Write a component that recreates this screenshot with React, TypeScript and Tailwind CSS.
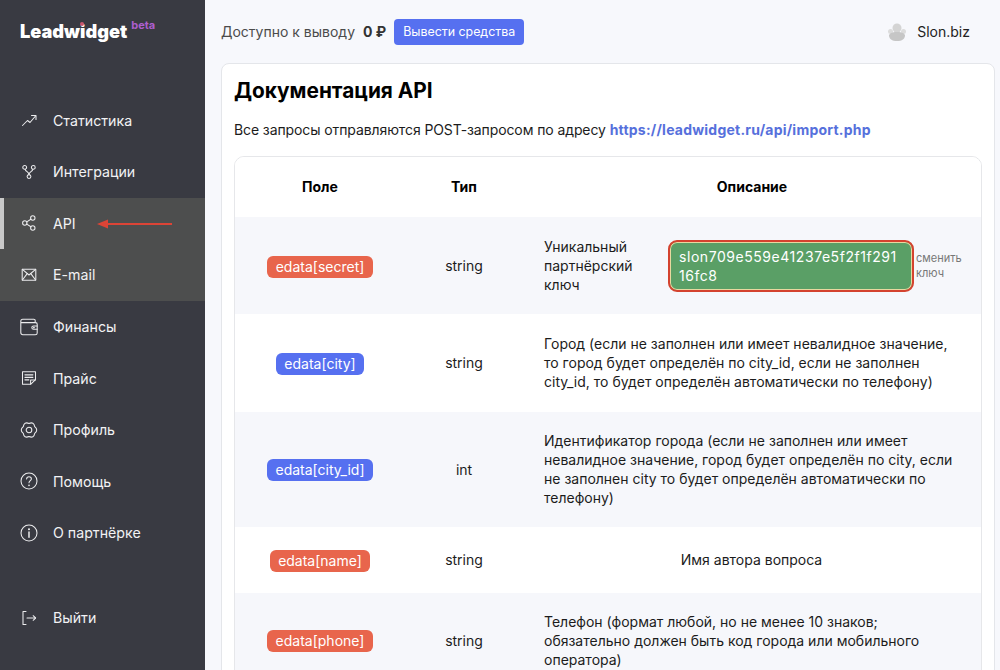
import React from "react";

const F = { fontFamily: '"Inter", "Noto Sans", sans-serif' };

const Ic = ({ children }: { children: React.ReactNode }) => (
  <svg width="18" height="18" viewBox="0 0 18 18" fill="none" stroke="#ececee" strokeWidth="1.05" strokeLinecap="round" strokeLinejoin="round">
    {children}
  </svg>
);

const icons: Record<string, React.ReactNode> = {
  stats: <Ic><path d="M2.5 14.5 L7.5 9.5 L10 11.5 L15.5 5" /><path d="M11.5 4.5 H16 V8.5" /></Ic>,
  integ: <Ic><circle cx="4.7" cy="4.4" r="1.9" /><circle cx="13.3" cy="4.4" r="1.9" /><circle cx="9" cy="13.6" r="1.9" /><path d="M5.2 6.3 C5.7 9 8.8 8.5 9 11.7" /><path d="M12.8 6.3 C12.3 9 9.2 8.5 9 11.7" /></Ic>,
  api: <Ic><circle cx="12.8" cy="4" r="2.2" /><circle cx="4.8" cy="9" r="2.2" /><circle cx="12.8" cy="14" r="2.2" /><path d="M6.7 7.9 L10.9 5.2" /><path d="M6.7 10.1 L10.9 12.8" /></Ic>,
  mail: <Ic><rect x="2.2" y="3.2" width="13.6" height="11" rx="0.4" /><path d="M2.4 3.4 L9 9 L15.6 3.4" /><path d="M2.4 14 L7.2 7.6" /><path d="M15.6 14 L10.8 7.6" /></Ic>,
  wallet: <Ic><path d="M15.2 4.6 V2.6 C15.2 1.6 14.6 1.2 13.8 1.2 H2.8 C1.5 1.2 0.8 2 0.8 3.2 V14.6 C0.8 15.9 1.6 16.7 2.9 16.7 H15.2 C16.4 16.7 17.2 16 17.2 15 V6.2 C17.2 5.2 16.5 4.6 15.6 4.6 H1.1" /><path d="M17.2 8 H13.6 C12.4 8 11.8 8.8 11.8 9.6 C11.8 10.5 12.4 11.3 13.6 11.3 H17.2" /><circle cx="13.9" cy="9.6" r="0.4" /></Ic>,
  price: <Ic><path d="M2.5 2.7 H15.5 V10.6 L10.6 15.3 H2.5 Z" /><path d="M5 5.8 H12.8" strokeWidth="1.3" /><path d="M5 8.3 H12.8" strokeWidth="1.3" /><path d="M5 10.8 H8.8" strokeWidth="1.3" /><path d="M10.6 15 V11 H15.3" /></Ic>,
  gear: <Ic><path d="M14.7 5.7 Q18.8 9 14.7 12.3 Q13.9 17.5 9 15.6 Q4.1 17.5 3.3 12.3 Q-0.8 9 3.3 5.7 Q4.1 0.5 9 2.4 Q13.9 0.5 14.7 5.7 Z" /><circle cx="9" cy="9" r="2.8" /></Ic>,
  help: <Ic><circle cx="9" cy="9" r="8" /><path d="M6.6 7 C6.7 5.5 7.8 4.7 9 4.7 C10.4 4.7 11.4 5.7 11.4 6.9 C11.4 8.6 9 8.7 9 10.8" /><circle cx="9" cy="13.3" r="0.35" /></Ic>,
  info: <Ic><circle cx="9" cy="9" r="8" /><path d="M9 8 V13.3" strokeWidth="1.5" /><circle cx="9" cy="5.2" r="0.5" /></Ic>,
  exit: <Ic><path d="M6 2.5 H3 V15.5 H6" /><path d="M7 9 H15.5" /><path d="M13.2 6.7 L15.6 9 L13.2 11.3" /></Ic>,
};

const NavItem = ({ icon, label, active, hl }: { icon: string; label: string; active?: boolean; hl?: boolean }) => (
  <div className={`relative flex h-[51.6px] items-center pl-[20px] ${hl ? "bg-[#4d4e4e]" : ""}`}>
    {active && <div className="absolute left-0 top-0 h-full w-[4px] bg-[#c9c9c9]" />}
    <div className="flex w-[33px] items-center"><span className="flex w-[18px] items-center justify-center">{icons[icon]}</span></div>
    <span className="text-[14.2px] text-[#f2f2f4]">{label}</span>
    {active && (
      <svg className="absolute left-[96px] top-[20px]" width="78" height="12" viewBox="0 0 78 12">
        <path d="M1 6 L12 1.5 V5 H76 V7 H12 V10.5 Z" fill="#dc4436" />
      </svg>
    )}
  </div>
);

const Pill = ({ text, red }: { text: string; red?: boolean }) => (
  <span className={`inline-block rounded-[6px] px-[8.5px] py-[2px] text-[14px] leading-[18px] text-white ${red ? "bg-[#e8654c]" : "bg-[#5670f0]"}`}>{text}</span>
);

const Row = ({ field, red, type, shade, h, children }: { field: string; red?: boolean; type: string; shade?: boolean; h: string; children: React.ReactNode }) => (
  <div className={`flex items-center ${h} ${shade ? "bg-[#f6f7fb]" : "bg-white"}`}>
    <div className="w-[170px] text-center"><Pill text={field} red={red} /></div>
    <div className="w-[118px] text-center text-[14px] text-[#1c1c1c]">{type}</div>
    <div className="flex-1 pl-[21px] pr-[22px] text-[14px] leading-[19px] text-[#1c1c1c]">{children}</div>
  </div>
);

export default function App() {
  return (
    <div style={F} className="flex h-[670px] w-[1000px] overflow-hidden bg-[#f7f8fc]">
      <aside className="flex w-[205px] shrink-0 flex-col bg-[#393a42]">
        <div className="flex h-[94.5px] items-start pl-[20px] pt-[20px]">
          <span className="relative text-[18.2px] font-black leading-[22px] text-white">
            Leadwidget
            <span className="absolute left-[60px] top-[2px] h-[4px] w-[4px] rounded-full bg-[#c9566e]" />
          </span>
          <span className="ml-[4px] mt-[-2px] text-[11px] font-bold leading-[14px] text-[#ad5fce]">beta</span>
        </div>
        <NavItem icon="stats" label="Статистика" />
        <NavItem icon="integ" label="Интеграции" />
        <NavItem icon="api" label="API" active hl />
        <NavItem icon="mail" label="E-mail" hl />
        <NavItem icon="wallet" label="Финансы" />
        <NavItem icon="price" label="Прайс" />
        <NavItem icon="gear" label="Профиль" />
        <NavItem icon="help" label="Помощь" />
        <NavItem icon="info" label="О партнёрке" />
        <div className="h-[33.5px]" />
        <NavItem icon="exit" label="Выйти" />
      </aside>
      <main className="flex-1 min-w-0 pl-[16px] pr-[5px]">
        <header className="flex h-[63px] items-center">
          <span className="text-[14px] text-[#4b4b4b]">Доступно к выводу</span>
          <span className="ml-[8px] text-[14px] font-bold text-[#333]">0 ₽</span>
          <span className="ml-[8px] rounded-[4px] bg-[#5670f0] px-[9px] py-[4.5px] text-[12.4px] leading-[17px] text-white">Вывести средства</span>
          <div className="ml-auto mr-[25px] flex items-center">
            <svg width="20" height="20" viewBox="0 0 20 20"><circle cx="10" cy="6" r="4.5" fill="#d4d4d4" /><circle cx="3.5" cy="9.5" r="2.5" fill="#dcdcdc" /><circle cx="16.5" cy="9.5" r="2.5" fill="#dcdcdc" /><path d="M2 13 C4 10 7 10 10 10 C13 10 16 10 18 13 C18 17 15 19 10 19 C5 19 2 17 2 13 Z" fill="#c6c6c6" /></svg>
            <span className="ml-[10px] text-[14px] text-[#222]">Slon.biz</span>
          </div>
        </header>
        <section className="rounded-[8px] border border-[#e4e6ea] bg-white px-[12px] pt-[12px]">
          <h1 className="text-[20.8px] font-bold leading-[30px] text-black">Документация API</h1>
          <p className="mt-[14px] text-[14px] leading-[20px] tracking-[-0.1px] text-[#1c1c1c]">
            Все запросы отправляются POST-запросом по адресу{" "}
            <a className="font-bold tracking-[0.22px] text-[#5670dc]">https://leadwidget.ru/api/import.php</a>
          </p>
          <div className="mt-[16px] overflow-hidden rounded-[10px] border border-[#e6e7ea]">
            <div className="flex h-[60px] items-center bg-white pb-[1px] text-[14px] font-bold text-black">
              <div className="w-[170px] text-center">Поле</div>
              <div className="w-[118px] text-center">Тип</div>
              <div className="flex-1 text-center">Описание</div>
            </div>
            <Row field="edata[secret]" red type="string" shade h="h-[97px]">
              <div className="-mr-[14px] flex items-center">
                <div className="w-[124px] shrink-0">Уникальный партнёрский ключ</div>
                <div className="w-[246px] shrink-0 rounded-[9px] border-[2px] border-[#d4432f] bg-[#5a9f66] px-[9px] py-[5px] text-[14px] leading-[19px] tracking-[0.55px] text-white shadow-[inset_0_0_0_1px_#e8d9a0]">
                  slon709e559e41237e5f2f1f291<br />16fc8
                </div>
                <div className="ml-[2px] text-[11px] leading-[15px] text-[#777]">сменить ключ</div>
              </div>
            </Row>
            <Row field="edata[city]" type="string" h="h-[97.5px]">Город (если не заполнен или имеет невалидное значение, то город будет определён по city_id, если не заполнен city_id, то будет определён автоматически по телефону)</Row>
            <Row field="edata[city_id]" type="int" shade h="h-[115px]">Идентификатор города (если не заполнен или имеет невалидное значение, город будет определён по city, если не заполнен city то будет определён автоматически по телефону)</Row>
            <Row field="edata[name]" red type="string" h="h-[66px]"><div className="text-center">Имя автора вопроса</div></Row>
            <Row field="edata[phone]" red type="string" shade h="h-[95px]">Телефон (формат любой, но не менее 10 знаков; обязательно должен быть код города или мобильного оператора)</Row>
          </div>
        </section>
      </main>
    </div>
  );
}
